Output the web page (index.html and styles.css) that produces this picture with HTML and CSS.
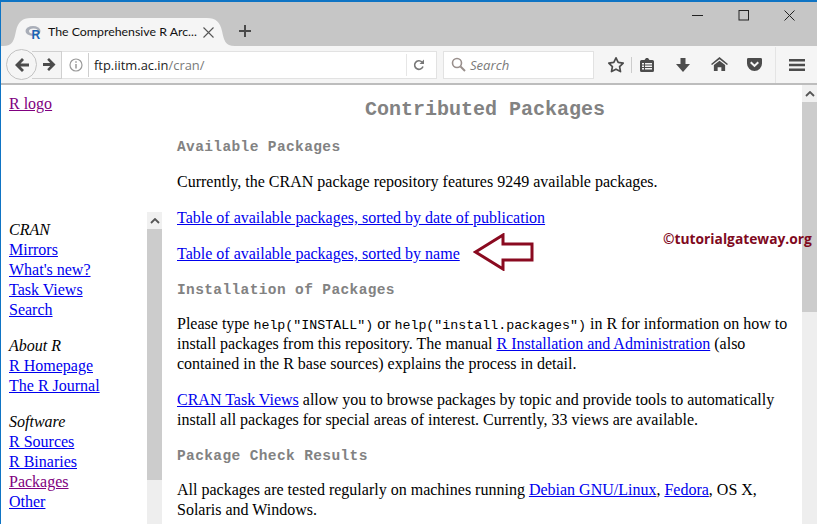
FILE: index.html
```html
<!DOCTYPE html>
<html lang="en">
<head>
<meta charset="utf-8">
<title>The Comprehensive R Archive Network</title>
<link rel="stylesheet" href="styles.css">
</head>
<body>
<div class="window">
  <header class="titlebar">
    <div class="tab">
      <svg class="tab-shape" width="232" height="28" viewBox="0 0 232 28"><path d="M0 28C10 28 11 22 13 13 15 4 19 0 28 0H204C213 0 217 4 219 13 221 22 222 28 232 28z" fill="#f5f5f5"/></svg>
      <svg class="favicon" width="18" height="18" viewBox="0 0 18 18"><ellipse cx="8" cy="8" rx="7.500" ry="5" fill="#a9aeb8"/><ellipse cx="8.500" cy="8" rx="4.500" ry="2.600" fill="#f5f5f5"/><text x="6.500" y="15.500" class="favicon-r">R</text></svg>
      <span class="tab-title">The Comprehensive R Arc...</span>
      <svg class="tab-close" width="11" height="11" viewBox="0 0 11 11"><path d="M.5.500l10 10M10.500.500l-10 10" stroke="#555" stroke-width="1.100" fill="none"/></svg>
    </div>
    <svg class="newtab" width="14" height="14" viewBox="0 0 14 14"><path d="M7 1v12M1 7h12" stroke="#4a4a4a" stroke-width="2" fill="none"/></svg>
    <div class="winctrls">
      <svg width="11" height="11" viewBox="0 0 11 11"><path d="M0 5.500h11" stroke="#222" fill="none"/></svg>
      <svg width="11" height="11" viewBox="0 0 11 11"><rect x="1" y=".5" width="9.500" height="9.500" stroke="#222" fill="none"/></svg>
      <svg width="11" height="11" viewBox="0 0 11 11"><path d="M.5.500l10 10M10.500.500l-10 10" stroke="#222" fill="none"/></svg>
    </div>
  </header>
  <nav class="toolbar">
    <div class="urlgroup">
      <div class="backbtn"><svg width="16" height="14" viewBox="0 0 16 14"><path d="M8 0L1 7l7 7 2-2-3.500-3.500H15v-3H6.500L10 2z" fill="#4c4c4c"/></svg></div>
      <div class="fwdbtn"><svg width="13" height="13" viewBox="0 0 13 13"><path d="M6 0l6.500 6.500L6 13l-1.800-1.800 3-3.200H0V5h7.200l-3-3.200z" fill="#4c4c4c"/></svg></div>
      <div class="urlbar">
        <svg class="info" width="14" height="14" viewBox="0 0 14 14"><circle cx="7" cy="7" r="6" stroke="#999" stroke-width="1.200" fill="none"/><path d="M7 6v4.500M7 3.200v1.600" stroke="#999" stroke-width="1.500"/></svg>
        <span class="url"><span class="url-host">ftp.iitm.ac.in</span>/cran/</span>
        <span class="url-sep"></span>
        <svg class="reload" width="12" height="12" viewBox="0 0 12 12"><path d="M10 7.500A4.300 4.300 0 1 1 9 3" stroke="#777" stroke-width="1.600" fill="none"/><path d="M11 .5v4.500H6.500z" fill="#777"/></svg>
      </div>
    </div>
    <div class="searchbar">
      <svg width="15" height="15" viewBox="0 0 15 15"><circle cx="6" cy="6" r="4.500" stroke="#998f8c" stroke-width="1.600" fill="none"/><path d="M9.500 9.500l4.500 4.500" stroke="#998f8c" stroke-width="2"/></svg>
      <span>Search</span>
    </div>
    <div class="tools">
      <svg class="star" width="18" height="18" viewBox="0 0 18 18"><path d="M9 1.800l2.200 4.600 5 .7-3.600 3.500.9 5L9 13.200l-4.500 2.400.9-5L1.800 7.100l5-.7z" stroke="#4c4c4c" stroke-width="1.700" fill="none" stroke-linejoin="round"/></svg>
      <span class="tool-sep"></span>
      <svg class="tool" width="16" height="16" viewBox="0 0 16 16"><path d="M1 4.500a1.500 1.500 0 0 1 1.500-1.500H5.500L7 1h2l1.500 2h3A1.500 1.500 0 0 1 15 4.500v9a1.500 1.500 0 0 1-1.500 1.500h-11A1.500 1.500 0 0 1 1 13.500z" fill="#4c4c4c"/><path d="M3 6h2v1.500H3zM6 6h7v1.500H6zM3 8.500h2V10H3zM6 8.500h7V10H6zM3 11h2v1.500H3zM6 11h7v1.500H6z" fill="#f5f5f5"/></svg>
      <svg class="tool" width="16" height="16" viewBox="0 0 16 16"><path d="M5.500 1h5v6H15l-7 8-7-8h4.500z" fill="#4c4c4c"/></svg>
      <svg class="tool tool-home" width="17" height="15" viewBox="0 0 18 16"><path d="M9 0l9 7.500-1 1L9 2.500 1 8.500l-1-1z" fill="#4c4c4c"/><path d="M9 4l6 4.500V15h-4v-4H7v4H3V8.500z" fill="#4c4c4c"/></svg>
      <svg class="tool tool-last" width="17" height="15" viewBox="0 0 17 16"><path d="M2 1h13a1.500 1.500 0 0 1 1.500 1.500V7a8 8 0 0 1-16 0V2.500A1.500 1.500 0 0 1 2 1z" fill="#4c4c4c"/><path d="M4.500 5.500l4 4 4-4" stroke="#f5f5f5" stroke-width="2.200" fill="none"/></svg>
      <span class="tool-sep tool-sep-tall"></span>
      <svg class="menu" width="16" height="14" viewBox="0 0 16 14"><path d="M0 1h16v2.500H0zM0 5.800h16v2.500H0zM0 10.500h16V13H0z" fill="#4c4c4c"/></svg>
    </div>
  </nav>
  <div class="content">
    <aside class="banner">
      <a class="visited" href="#logo">R logo</a>
    </aside>
    <div class="navframe">
      <div class="navlinks">
        <section class="navgroup">
          <em>CRAN</em>
          <a href="#a">Mirrors</a>
          <a href="#b">What's new?</a>
          <a href="#c">Task Views</a>
          <a href="#d">Search</a>
        </section>
        <section class="navgroup">
          <em>About R</em>
          <a href="#e">R Homepage</a>
          <a href="#f">The R Journal</a>
        </section>
        <section class="navgroup">
          <em>Software</em>
          <a href="#g">R Sources</a>
          <a href="#h">R Binaries</a>
          <a class="visited" href="#i">Packages</a>
          <a href="#j">Other</a>
        </section>
      </div>
      <div class="scroll scroll-nav"><div class="scroll-up"><svg width="10" height="6" viewBox="0 0 10 6"><path d="M1 5l4-4 4 4" stroke="#555" stroke-width="1.800" fill="none"/></svg></div><div class="thumb thumb-nav"></div></div>
    </div>
    <main class="main">
      <h1>Contributed Packages</h1>
      <h2>Available Packages</h2>
      <p>Currently, the CRAN package repository features 9249 available packages.</p>
      <p><a href="#k">Table of available packages, sorted by date of publication</a></p>
      <p><a href="#l">Table of available packages, sorted by name</a></p>
      <h2>Installation of Packages</h2>
      <p>Please type <code>help("INSTALL")</code> or <code>help("install.packages")</code> in R for information on how to install packages from this repository. The manual <a href="#m">R Installation and Administration</a> (also contained in the R base sources) explains the process in detail.</p>
      <p><a href="#n">CRAN Task Views</a> allow you to browse packages by topic and provide tools to automatically install all packages for special areas of interest. Currently, 33 views are available.</p>
      <h2>Package Check Results</h2>
      <p>All packages are tested regularly on machines running <a href="#o">Debian GNU/Linux</a>, <a href="#p">Fedora</a>, OS X, Solaris and Windows.</p>
    </main>
    <div class="scroll scroll-main"><div class="scroll-up"><svg width="10" height="6" viewBox="0 0 10 6"><path d="M1 5l4-4 4 4" stroke="#555" stroke-width="1.800" fill="none"/></svg></div><div class="thumb thumb-main"></div></div>
    <svg class="arrow" width="62" height="38" viewBox="0 0 62 38"><path d="M2.500 19L30 2v9h29v16H30v9z" stroke="#8a0a20" stroke-width="3" fill="#fff"/></svg>
    <div class="watermark">©tutorialgateway.org</div>
  </div>
</div>
</body>
</html>
```

FILE: styles.css
```css
* { box-sizing: border-box; }
html, body { margin: 0; height: 100%; overflow: hidden; }
body { background: #fff; }
.window { width: 817px; height: 524px; display: flex; flex-direction: column; border-top: 2px solid #0f74c4; border-left: 1px solid #0f74c4; }
.titlebar { height: 44px; flex: none; background: #c6c6c6; display: flex; align-items: flex-end; position: relative; }
.tab { width: 232px; height: 28px; margin-left: 2px; display: flex; align-items: center; padding: 0 21px 0 22px; font: 12.350px/1 Lato, "Open Sans", sans-serif; color: #111; position: relative; }
.tab-shape { position: absolute; left: 0; top: 0; }
.tab > :not(.tab-shape) { position: relative; }
.favicon { flex: none; margin-right: 5px; }
.favicon-r { font: bold 12px "Liberation Sans", sans-serif; fill: #1a63b5; }
.tab-title { white-space: nowrap; flex: none; }
.tab-close { flex: none; margin-left: auto; }
.newtab { margin: 0 0 8px 3px; }
.winctrls { position: absolute; top: 8px; right: 22px; display: flex; gap: 35px; }
.toolbar { height: 39px; flex: none; background: #f5f5f5; border-bottom: 2px solid #bdbdbd; display: flex; align-items: center; padding-left: 5px; }
.urlgroup { display: flex; align-items: center; width: 431px; height: 28px; position: relative; }
.backbtn { width: 31px; height: 31px; border-radius: 50%; background: #f5f5f5; border: 1px solid #c2c2c2; display: flex; align-items: center; justify-content: center; flex: none; position: relative; z-index: 1; }
.fwdbtn { width: 30px; height: 28px; margin-left: -5px; background: #f5f5f5; border: 1px solid #d0d0d0; border-left: 0; display: flex; align-items: center; justify-content: center; flex: none; padding-left: 5px; }
.urlbar { flex: 1; height: 28px; background: #fff; border: 1px solid #e2e2e2; border-left: 0; display: flex; align-items: center; padding-left: 7px; font: 12.900px "Open Sans", "Noto Sans", sans-serif; color: #7a7a7a; }
.info { flex: none; margin-right: 5px; }
.url { flex: 1; border-left: 1px solid #cfcfcf; padding: 1px 0 0 5px; line-height: 23px; }
.url-host { color: #222; }
.url-sep { width: 1px; height: 22px; background: #e6e6e6; flex: none; margin-left: 8px; }
.reload { flex: none; margin: 0 11px 0 6px; }
.searchbar { width: 151px; height: 28px; margin-left: 6px; background: #fff; border: 1px solid #e2e2e2; display: flex; align-items: center; padding-left: 7px; gap: 4px; font: italic 13.100px "Open Sans", "Noto Sans", sans-serif; color: #7a7a7a; }
.searchbar span { padding-top: 1px; }
.tools { display: flex; align-items: center; margin-left: 13px; }
.tool-sep { width: 1px; height: 16px; background: #ccc; margin: 0 7px 0 6px; }
.tool-sep-tall { height: 36px; background: #e4e4e4; margin: 0 13px 0 12px; }
.tool { margin-right: 20px; flex: none; }
.tool-home { margin-right: 18px; }
.tool-last { margin-right: 0; }
.menu { flex: none; }
.content { flex: 1; min-height: 0; display: grid; grid-template-columns: 147px 1fr 15px; grid-template-rows: 127px 1fr; position: relative; overflow: hidden; font: 16px/20px "Liberation Serif", serif; color: #000; }
.banner { grid-column: 1; grid-row: 1; padding: 9px 0 0 8px; }
a { color: #0000ee; }
a.visited { color: #800080; }
.navframe { grid-column: 1; grid-row: 2; display: flex; width: 162px; margin-right: -15px; }
.navlinks { width: 146px; padding: 8px 0 0 8px; }
.navgroup { display: flex; flex-direction: column; align-items: flex-start; margin-bottom: 16px; }
.navgroup em { font-style: italic; }
.scroll { background: #eeeeee; display: flex; flex-direction: column; width: 15px; flex: none; }
.scroll-up { height: 17px; background: #f0f0f0; display: flex; align-items: center; justify-content: center; flex: none; }
.thumb { background: #cccccc; }
.thumb-nav { height: 251px; }
.thumb-main { height: 210px; }
.scroll-main { grid-column: 3; grid-row: 1 / 3; }
.main { grid-column: 2; grid-row: 1 / 3; padding: 0 9px 0 29px; overflow: hidden; }
.main p { margin: 16px 0; }
h1 { font: bold 20px/22px "Liberation Mono", monospace; color: #828282; text-align: center; margin: 14px 0 17px; }
h2 { font: bold 14.500px/18px "Liberation Mono", monospace; letter-spacing: .38px; color: #828282; margin: 0; }
p + h2 { margin: 17px 0 -1px; }
code { font: 13.300px "Liberation Mono", monospace; }
.arrow { position: absolute; left: 472px; top: 148px; }
.watermark { position: absolute; left: 662px; top: 144px; font: bold 13.800px/20px "Open Sans", "Noto Sans", sans-serif; color: #7f0a1e; white-space: nowrap; }
```
